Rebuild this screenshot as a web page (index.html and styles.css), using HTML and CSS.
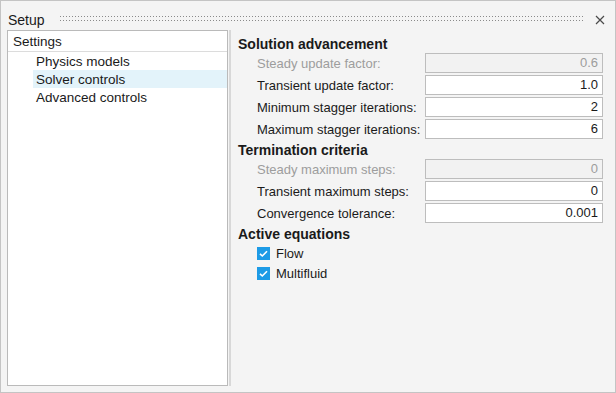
FILE: index.html
```html
<!DOCTYPE html>
<html>
<head>
  <link rel="stylesheet" href="styles.css">
</head>
<body>
  <div class="window">
    <div class="titlebar">
      <span class="title">Setup</span>
      <div class="grip"></div>
      <svg class="close" width="10" height="10" viewBox="0 0 10 10">
        <path d="M1 1 L9 9 M9 1 L1 9" stroke="#4a4a4a" stroke-width="1.2" fill="none"/>
      </svg>
    </div>
    <div class="main">
      <div class="tree">
        <div class="tree-header">Settings</div>
        <div class="tree-item">Physics models</div>
        <div class="tree-item selected">Solver controls</div>
        <div class="tree-item">Advanced controls</div>
      </div>
      <div class="splitter"></div>
      <div class="form">
        <div class="section">Solution advancement</div>
        <div class="row disabled">
          <span class="label">Steady update factor:</span>
          <div class="field">0.6</div>
        </div>
        <div class="row">
          <span class="label">Transient update factor:</span>
          <div class="field">1.0</div>
        </div>
        <div class="row">
          <span class="label">Minimum stagger iterations:</span>
          <div class="field">2</div>
        </div>
        <div class="row">
          <span class="label">Maximum stagger iterations:</span>
          <div class="field">6</div>
        </div>

        <div class="section">Termination criteria</div>
        <div class="row disabled">
          <span class="label">Steady maximum steps:</span>
          <div class="field">0</div>
        </div>
        <div class="row">
          <span class="label">Transient maximum steps:</span>
          <div class="field">0</div>
        </div>
        <div class="row">
          <span class="label">Convergence tolerance:</span>
          <div class="field">0.001</div>
        </div>

        <div class="section">Active equations</div>
        <div class="check-row">
          <span class="checkbox">
            <svg width="13" height="13" viewBox="0 0 13 13">
              <path d="M3 6.8 L5.3 9 L10 4.2" stroke="#fff" stroke-width="1.6" fill="none"/>
            </svg>
          </span>
          <span>Flow</span>
        </div>
        <div class="check-row">
          <span class="checkbox">
            <svg width="13" height="13" viewBox="0 0 13 13">
              <path d="M3 6.8 L5.3 9 L10 4.2" stroke="#fff" stroke-width="1.6" fill="none"/>
            </svg>
          </span>
          <span>Multifluid</span>
        </div>
      </div>
    </div>
  </div>
</body>
</html>
```

FILE: styles.css
```css
body {
  margin: 0;
  font-family: "Liberation Sans", Arial, sans-serif;
  font-size: 13px;
  color: #1a1a1a;
}

.window {
  width: 616px;
  height: 393px;
  box-sizing: border-box;
  border: 1px solid #c4c4c4;
  background-color: #f4f4f4;
  display: flex;
  flex-direction: column;
}

.titlebar {
  height: 29px;
  display: flex;
  align-items: center;
  padding: 0 10px 0 7px;
  flex-shrink: 0;
}

.title {
  font-size: 14px;
  margin-top: 8px;
}

.grip {
  flex: 1;
  height: 7px;
  margin: 8px 12px 0 15px;
  background: repeating-linear-gradient(90deg, #8a8a8a 0 1px, transparent 1px 3px);
  -webkit-mask-image: repeating-linear-gradient(180deg, #000 0 1px, transparent 1px 4px);
  mask-image: repeating-linear-gradient(180deg, #000 0 1px, transparent 1px 4px);
}

.close {
  margin-top: 8px;
}

.main {
  flex: 1;
  display: flex;
  padding: 0 0 6px 6px;
  min-height: 0;
}

.tree {
  width: 221px;
  box-sizing: border-box;
  background-color: #fff;
  border: 1px solid #bababa;
}

.tree-header {
  height: 20px;
  line-height: 21px;
  padding-left: 5px;
  border-bottom: 1px solid #dcdcdc;
  font-size: 13.5px;
}

.tree-item {
  height: 18px;
  line-height: 19px;
  margin-left: 25px;
  padding-left: 3px;
  font-size: 13.5px;
}

.tree-item.selected {
  background-color: #e3f3fa;
}

.splitter {
  width: 2px;
  margin-left: 1px;
  background-color: #d8d8d8;
}

.form {
  flex: 1;
  padding: 5px 12px 0 7px;
}

.section {
  height: 18px;
  line-height: 18px;
  font-weight: bold;
  font-size: 14px;
}

.row {
  display: flex;
  align-items: center;
  height: 20px;
  margin-bottom: 2px;
  padding-left: 19px;
}

.label {
  flex: 1;
}

.field {
  width: 178px;
  height: 20px;
  box-sizing: border-box;
  border: 1px solid #bdbdbd;
  background-color: #fff;
  text-align: right;
  line-height: 18px;
  padding-right: 4px;
}

.row.disabled .label,
.row.disabled .field {
  color: #9d9d9d;
}

.row.disabled .field {
  background-color: #f2f2f2;
}

.check-row {
  display: flex;
  align-items: center;
  height: 20px;
  padding-left: 19px;
}

.checkbox {
  width: 13px;
  height: 13px;
  background-color: #1d9be6;
  margin-right: 6px;
  display: flex;
}
```
